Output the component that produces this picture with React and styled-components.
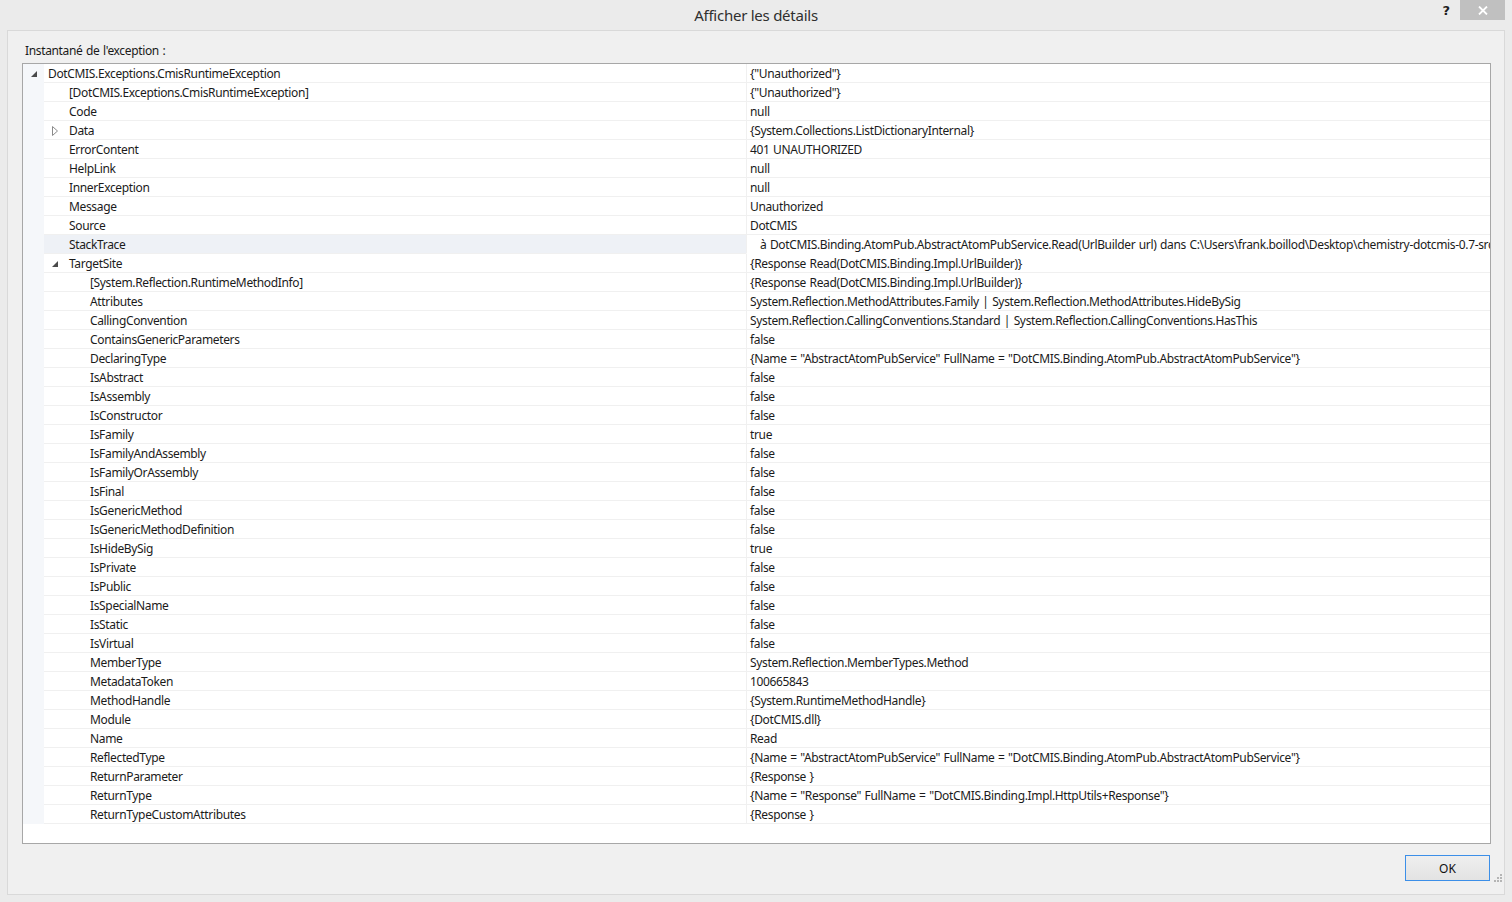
import styled, { createGlobalStyle } from 'styled-components';

const GlobalStyle = createGlobalStyle`
   html, body {
      margin: 0;
      padding: 0;
      background: #ebebeb;
      font-family: "Noto Sans", "Open Sans", sans-serif;
   }
`;

const Window = styled.div`
   width: 1512px;
   height: 902px;
   background: #ebebeb;
   display: flex;
   flex-direction: column;
   box-sizing: border-box;
   padding: 0 7px 7px 7px;
   overflow: hidden;
`;

const TitleBar = styled.div`
   height: 30px;
   flex: none;
   display: grid;
   grid-template-columns: 1fr auto 1fr;
   align-items: start;
   margin: 0 -7px;
`;

const Title = styled.div`
   grid-column: 2;
   font-size: 15px;
   line-height: 30px;
   letter-spacing: -0.25px;
   color: #2f2f2f;
`;

const Caption = styled.div`
   grid-column: 3;
   justify-self: end;
   display: flex;
   align-items: flex-start;
   gap: 10px;
   padding-right: 7px;
`;

const HelpButton = styled.span`
   font-size: 13px;
   font-weight: bold;
   color: #1e1e1e;
   line-height: 22px;
   font-family: "DejaVu Sans", sans-serif;
`;

const CloseButton = styled.div`
   width: 45px;
   height: 20px;
   background: #c0c0c0;
   display: flex;
   align-items: center;
   justify-content: center;
`;

const Client = styled.div`
   flex: 1;
   background: #f0f0f0;
   border: 1px solid #d9d9d9;
   display: flex;
   flex-direction: column;
   padding: 12px 13px 13px 14px;
   min-height: 0;
`;

const SectionLabel = styled.div`
   font-size: 12px;
   line-height: 16px;
   letter-spacing: -0.35px;
   word-spacing: 0.8px;
   color: #1a1a1a;
   padding-left: 3px;
   margin-bottom: 4px;
`;

const TreeGrid = styled.div`
   height: 781px;
   box-sizing: border-box;
   border: 1px solid #a7a7a7;
   background: #fff;
   overflow: hidden;
`;

const Row = styled.div`
   display: grid;
   grid-template-columns: 723px 1fr;
   height: 19px;
   font-size: 12px;
   line-height: 18px;
   letter-spacing: -0.35px;
   word-spacing: 0.8px;
   color: #1b1b1b;
`;

const NameCell = styled.div`
   display: flex;
   align-items: center;
   padding-left: ${p => p.$level * 21 + 5}px;
   background:
      linear-gradient(#f0f0f0, #f0f0f0) 21px 100% / calc(100% - 21px) 1px no-repeat,
      linear-gradient(to right, #f5f7fa 21px, ${p => (p.$selected ? '#eef1f6' : '#fff')} 21px);
   white-space: nowrap;
   overflow: hidden;
`;

const Expander = styled.span`
   width: 12px;
   height: 18px;
   flex: none;
   display: flex;
   align-items: center;
   justify-content: center;
   margin-right: 8px;
`;

const ValueCell = styled.div`
   border-left: 1px solid #f0f0f0;
   border-bottom: 1px solid ${p => (p.$editing ? '#fff' : '#f0f0f0')};
   padding-top: 1px;
   padding-left: ${p => (p.$editing ? 13 : 3)}px;
   white-space: nowrap;
   overflow: hidden;
`;

const Footer = styled.div`
   display: flex;
   justify-content: flex-end;
   margin-top: 11px;
   padding-right: 1px;
`;

const OkButton = styled.button`
   width: 85px;
   height: 26px;
   border: 1px solid #3c8fe8;
   background: linear-gradient(#efefef, #e3e3e3);
   font-family: inherit;
   font-size: 12px;
   color: #111;
   padding: 0;
`;

const Grip = styled.div`
   align-self: flex-end;
   margin: -8px -12px -12px 0;
   width: 10px;
   height: 10px;
   display: flex;
`;

const ExpandedIcon = () => (
   <svg width="8" height="8" viewBox="0 0 8 8">
      <polygon points="7,1 7,7 1,7" fill="#4a4a4a" />
   </svg>
);

const CollapsedIcon = () => (
   <svg width="8" height="10" viewBox="0 0 8 10">
      <polygon points="1.5,0.5 6.5,5 1.5,9.5" fill="none" stroke="#8a8a8a" strokeWidth="1" />
   </svg>
);

const rows = [
   { n: 'DotCMIS.Exceptions.CmisRuntimeException', v: '{"Unauthorized"}', l: 0, e: 'open' },
   { n: '[DotCMIS.Exceptions.CmisRuntimeException]', v: '{"Unauthorized"}', l: 1 },
   { n: 'Code', v: 'null', l: 1 },
   { n: 'Data', v: '{System.Collections.ListDictionaryInternal}', l: 1, e: 'closed' },
   { n: 'ErrorContent', v: '401 UNAUTHORIZED', l: 1 },
   { n: 'HelpLink', v: 'null', l: 1 },
   { n: 'InnerException', v: 'null', l: 1 },
   { n: 'Message', v: 'Unauthorized', l: 1 },
   { n: 'Source', v: 'DotCMIS', l: 1 },
   { n: 'StackTrace', v: 'à DotCMIS.Binding.AtomPub.AbstractAtomPubService.Read(UrlBuilder url) dans C:\\Users\\frank.boillod\\Desktop\\chemistry-dotcmis-0.7-src\\DotCMIS\\binding\\atompub\\atompub.cs:ligne 280', l: 1, sel: true },
   { n: 'TargetSite', v: '{Response Read(DotCMIS.Binding.Impl.UrlBuilder)}', l: 1, e: 'open' },
   { n: '[System.Reflection.RuntimeMethodInfo]', v: '{Response Read(DotCMIS.Binding.Impl.UrlBuilder)}', l: 2 },
   { n: 'Attributes', v: 'System.Reflection.MethodAttributes.Family | System.Reflection.MethodAttributes.HideBySig', l: 2 },
   { n: 'CallingConvention', v: 'System.Reflection.CallingConventions.Standard | System.Reflection.CallingConventions.HasThis', l: 2 },
   { n: 'ContainsGenericParameters', v: 'false', l: 2 },
   { n: 'DeclaringType', v: '{Name = "AbstractAtomPubService" FullName = "DotCMIS.Binding.AtomPub.AbstractAtomPubService"}', l: 2 },
   { n: 'IsAbstract', v: 'false', l: 2 },
   { n: 'IsAssembly', v: 'false', l: 2 },
   { n: 'IsConstructor', v: 'false', l: 2 },
   { n: 'IsFamily', v: 'true', l: 2 },
   { n: 'IsFamilyAndAssembly', v: 'false', l: 2 },
   { n: 'IsFamilyOrAssembly', v: 'false', l: 2 },
   { n: 'IsFinal', v: 'false', l: 2 },
   { n: 'IsGenericMethod', v: 'false', l: 2 },
   { n: 'IsGenericMethodDefinition', v: 'false', l: 2 },
   { n: 'IsHideBySig', v: 'true', l: 2 },
   { n: 'IsPrivate', v: 'false', l: 2 },
   { n: 'IsPublic', v: 'false', l: 2 },
   { n: 'IsSpecialName', v: 'false', l: 2 },
   { n: 'IsStatic', v: 'false', l: 2 },
   { n: 'IsVirtual', v: 'false', l: 2 },
   { n: 'MemberType', v: 'System.Reflection.MemberTypes.Method', l: 2 },
   { n: 'MetadataToken', v: '100665843', l: 2 },
   { n: 'MethodHandle', v: '{System.RuntimeMethodHandle}', l: 2 },
   { n: 'Module', v: '{DotCMIS.dll}', l: 2 },
   { n: 'Name', v: 'Read', l: 2 },
   { n: 'ReflectedType', v: '{Name = "AbstractAtomPubService" FullName = "DotCMIS.Binding.AtomPub.AbstractAtomPubService"}', l: 2 },
   { n: 'ReturnParameter', v: '{Response }', l: 2 },
   { n: 'ReturnType', v: '{Name = "Response" FullName = "DotCMIS.Binding.Impl.HttpUtils+Response"}', l: 2 },
   { n: 'ReturnTypeCustomAttributes', v: '{Response }', l: 2 },
];

export default function App() {
   return (
      <Window>
         <GlobalStyle />
         <TitleBar>
            <Title>Afficher les détails</Title>
            <Caption>
               <HelpButton>?</HelpButton>
               <CloseButton>
                  <svg width="10" height="9" viewBox="0 0 10 9">
                     <path d="M1 0.5 L9 8.5 M9 0.5 L1 8.5" stroke="#fff" strokeWidth="1.8" />
                  </svg>
               </CloseButton>
            </Caption>
         </TitleBar>
         <Client>
            <SectionLabel>Instantané de l'exception :</SectionLabel>
            <TreeGrid>
               {rows.map((r, i) => (
                  <Row key={i}>
                     <NameCell $level={r.l} $selected={r.sel}>
                        <Expander>
                           {r.e === 'open' && <ExpandedIcon />}
                           {r.e === 'closed' && <CollapsedIcon />}
                        </Expander>
                        {r.n}
                     </NameCell>
                     <ValueCell $editing={r.sel}>{r.v}</ValueCell>
                  </Row>
               ))}
            </TreeGrid>
            <Footer>
               <OkButton>OK</OkButton>
            </Footer>
            <Grip>
               <svg width="10" height="10" viewBox="0 0 10 10">
                  <g fill="#b5b5b5">
                     <rect x="7" y="1" width="2" height="2" />
                     <rect x="4" y="4" width="2" height="2" />
                     <rect x="7" y="4" width="2" height="2" />
                     <rect x="1" y="7" width="2" height="2" />
                     <rect x="4" y="7" width="2" height="2" />
                     <rect x="7" y="7" width="2" height="2" />
                  </g>
               </svg>
            </Grip>
         </Client>
      </Window>
   );
}
